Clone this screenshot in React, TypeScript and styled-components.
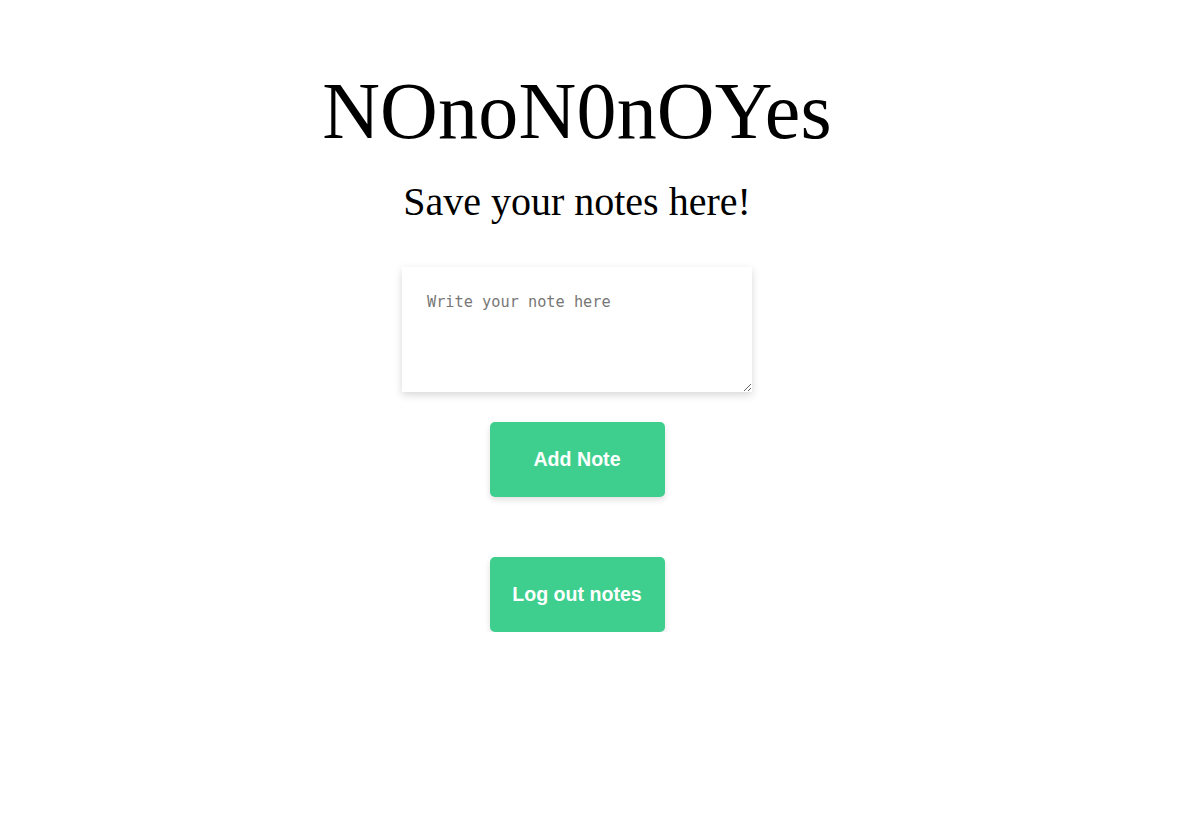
import React from "react";
import styled, { createGlobalStyle } from "styled-components";

const Global = createGlobalStyle`
  html, body { margin: 0; padding: 0; background: #ffffff; }
  body { font-family: "Liberation Serif", "Times New Roman", serif; color: #000; }
`;

const Page = styled.main`
  width: 1154px;
  display: flex;
  flex-direction: column;
  align-items: center;
  padding-top: 71px;
`;

const Title = styled.h1`
  margin: 0;
  font-family: "Liberation Serif", serif;
  font-weight: 400;
  font-size: 80px;
  line-height: 80px;
  letter-spacing: 0.2px;
`;

const Subtitle = styled.h2`
  margin: 31px 0 0;
  font-family: "Liberation Serif", serif;
  font-weight: 400;
  font-size: 40px;
  line-height: 40px;
`;

const NoteInput = styled.textarea`
  margin-top: 45px;
  width: 350px;
  height: 125px;
  box-sizing: border-box;
  padding: 26px 25px 25px;
  border: none;
  outline: none;
  font-family: "DejaVu Sans Mono", monospace;
  font-size: 15.25px;
  line-height: 18px;
  box-shadow: 0 3px 8px rgba(0, 0, 0, 0.16);
  &::placeholder { color: #777; }
`;

const ActionButton = styled.button<{ $gap: number }>`
  margin-top: ${(p) => p.$gap}px;
  width: 175px;
  height: 75px;
  border: none;
  border-radius: 5px;
  background: #3ecf8e;
  color: #ffffff;
  font-family: "Liberation Sans", Arial, sans-serif;
  font-weight: 700;
  font-size: 19.6px;
  box-shadow: 0 3px 6px rgba(0, 0, 0, 0.12);
  cursor: pointer;
`;

export default function App() {
  return (
    <>
      <Global />
      <Page>
        <Title>NOnoN0nOYes</Title>
        <Subtitle>Save your notes here!</Subtitle>
        <NoteInput placeholder="Write your note here" />
        <ActionButton $gap={30}>Add Note</ActionButton>
        <ActionButton $gap={60}>Log out notes</ActionButton>
      </Page>
    </>
  );
}
